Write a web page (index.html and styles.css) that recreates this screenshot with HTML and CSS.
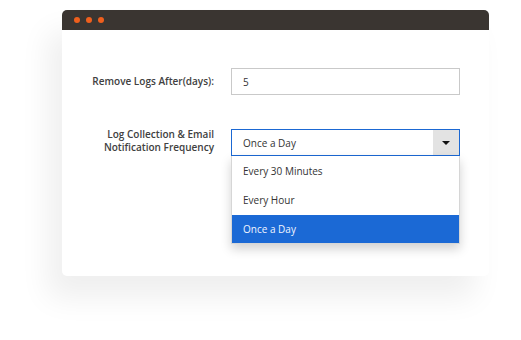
FILE: index.html
```html
<!DOCTYPE html>
<html>
<head>
<meta charset="utf-8">
<link rel="stylesheet" href="styles.css">
</head>
<body>
<div class="window">
  <div class="titlebar">
    <span class="dot"></span><span class="dot"></span><span class="dot"></span>
  </div>
  <div class="content">
    <div class="row row-input">
      <label class="label label-single">Remove Logs After(days):</label>
      <div class="input">5</div>
    </div>
    <div class="row row-select">
      <label class="label label-double">Log Collection &amp; Email<br>Notification Frequency</label>
      <div class="select-wrap">
        <div class="select">
          <span class="select-value">Once a Day</span>
          <span class="select-btn"><span class="caret"></span></span>
        </div>
        <ul class="menu">
          <li class="option">Every 30 Minutes</li>
          <li class="option">Every Hour</li>
          <li class="option selected">Once a Day</li>
        </ul>
      </div>
    </div>
  </div>
</div>
</body>
</html>
```
FILE: styles.css
```css
* { box-sizing: border-box; }
html, body { margin: 0; padding: 0; background: #fff; }
body {
  font-family: "Open Sans", "Liberation Sans", sans-serif;
  width: 521px;
  height: 340px;
  overflow: hidden;
  padding: 10px 0 0 62px;
}
.window {
  width: 427px;
  height: 266px;
  background: #fff;
  border-radius: 5px;
  box-shadow: -14px 22px 30px rgba(0, 0, 0, 0.065);
}
.titlebar {
  height: 20px;
  background: #3a3531;
  border-radius: 5px 5px 0 0;
  display: flex;
  align-items: center;
  gap: 6px;
  padding-left: 12px;
}
.dot {
  width: 6px;
  height: 6px;
  border-radius: 50%;
  background: #ef5f1d;
}
.content {
  padding-top: 38px;
  display: flex;
  flex-direction: column;
  gap: 34px;
}
.row {
  display: grid;
  grid-template-columns: 152px 229px;
  column-gap: 17px;
}
.label {
  text-align: right;
  font-size: 10px;
  font-weight: 600;
  color: #414141;
  line-height: 13px;
}
.label-single { align-self: center; }
.label-double { margin-top: -1px; }
.input {
  height: 27px;
  border: 1px solid #c9c9c9;
  font-size: 10px;
  color: #333;
  padding-left: 11px;
  display: flex;
  align-items: center;
}
.select-wrap { position: relative; }
.select {
  height: 27px;
  border: 1px solid #1b68d3;
  display: flex;
  align-items: stretch;
}
.select-value {
  flex: 1;
  font-size: 10px;
  color: #333;
  padding-left: 11px;
  display: flex;
  align-items: center;
}
.select-btn {
  width: 26px;
  background: #e3e3e3;
  display: flex;
  align-items: center;
  justify-content: center;
}
.caret {
  width: 0;
  height: 0;
  border-left: 4px solid transparent;
  border-right: 4px solid transparent;
  border-top: 4px solid #111;
}
.menu {
  position: absolute;
  top: 27px;
  left: 0;
  width: 229px;
  margin: 0;
  padding: 1px 0 0;
  list-style: none;
  background: #fff;
  border: 1px solid #d6d6d6;
  border-top: none;
  box-shadow: 0 5px 10px rgba(0, 0, 0, 0.18);
}
.option {
  height: 29px;
  font-size: 10px;
  color: #333;
  padding: 0 0 1px 11px;
  display: flex;
  align-items: center;
}
.option.selected {
  height: 28px;
  background: #1b69d5;
  color: #f2f5ff;
}
```
